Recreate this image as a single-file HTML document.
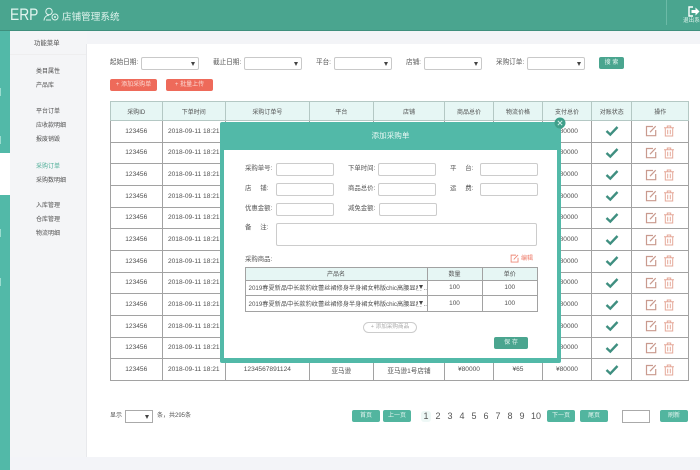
<!DOCTYPE html>
<html lang="zh"><head><meta charset="utf-8"><title>ERP</title>
<style>
*{box-sizing:border-box;margin:0;padding:0}
html,body{width:700px;height:470px;overflow:hidden;background:#fff}
body{font-family:"Liberation Sans","Noto Sans CJK SC",sans-serif;font-size:6px;color:#555;position:relative}
#w{position:absolute;left:0;top:0;width:700px;height:470px;filter:blur(.35px);overflow:hidden}
.a{position:absolute;white-space:nowrap}
.t{position:absolute;white-space:nowrap;line-height:10px;height:10px}
.s{position:absolute;height:13px;width:58px;background:#fff;border:1px solid #c9c9c9;border-radius:2px}
.s:after{content:"";position:absolute;right:3px;top:4px;border-left:2.5px solid transparent;border-right:2.5px solid transparent;border-top:4px solid #444}
.i{position:absolute;height:12.5px;width:58px;background:#fff;border:1px solid #ccc;border-radius:2px}
.b{position:absolute;height:12px;width:28px;background:#52b59f;color:#e6f6f1;border-radius:2px;text-align:center;line-height:12px;font-size:6px}
.m{position:absolute;left:36px;line-height:10px;height:10px;color:#505050;font-size:6px}
table{border-collapse:collapse;table-layout:fixed;position:absolute}
td,th{border:1px solid #a2a2a2;text-align:center;font-weight:normal;font-size:6px;color:#505050;padding:0;overflow:hidden;white-space:nowrap}
#T{left:110px;top:101px;width:578px}
#T th{height:19px;background:#e6f6f4;border-color:#b4c8c4}
#T td{height:21.67px;font-size:6.6px}
svg{display:block;margin:auto}
#M table{left:24.5px;top:145px;width:292.5px}
#M th{height:12.5px;background:#e6f6f4}
#M td{height:15.7px;text-align:left;padding-left:3px;font-size:6.2px}
#M td.c{text-align:center;padding:0;font-size:6.4px}
.n{position:absolute;top:411px;font-size:9px;line-height:11px;color:#555;width:10px;text-align:center}
</style></head><body>
<svg width="0" height="0" style="position:absolute"><defs>
<symbol id="ck" viewBox="0 0 14 12"><path d="M1.5 6 L5.3 9.6 L12.5 2" fill="none" stroke="#3f8f80" stroke-width="2.4"/></symbol>
<symbol id="ed" viewBox="0 0 12 12"><path d="M8 1.5H1.5V10.7H10.7V5M5 7.2L10.7 1.2" fill="none" stroke="#c99a8e" stroke-width="1.2"/></symbol>
<symbol id="tr" viewBox="0 0 12 12"><path d="M1 2.8H11M4.3 2.5V1H7.7V2.5M2.3 3V11H9.7V3M4.7 4.7V9.3M7.3 4.7V9.3" fill="none" stroke="#e5a899" stroke-width="1"/></symbol>
</defs></svg>
<div id="w">
<div class="a" style="left:0;top:0;width:700px;height:31px;background:#4aa58f;border-bottom:1px solid #3f8f7d"></div>
<div class="a" style="left:10px;top:1px;font-size:13.8px;line-height:28px;color:#e2f5ef;transform:scaleY(1.22);transform-origin:0 50%">ERP</div>
<svg class="a" style="left:43px;top:7px" width="17" height="15" viewBox="0 0 17 15"><circle cx="6" cy="4.5" r="3.2" fill="none" stroke="#dff3ed"/><path d="M1 13.5C1.5 9.5 4 8.3 6 8.3M8 13H3" fill="none" stroke="#dff3ed"/><circle cx="12" cy="10" r="3" fill="none" stroke="#dff3ed"/><circle cx="12" cy="10" r="1" fill="#dff3ed"/></svg>
<div class="a" style="left:62px;top:11px;font-size:9.6px;line-height:14px;color:#e2f5ef">店铺管理系统</div>
<div class="a" style="left:666px;top:0;width:1px;height:25px;background:#6cbaa7"></div>
<svg class="a" style="left:688px;top:6px" width="12" height="11" viewBox="0 0 12 11"><path d="M5 1H1V10H5" fill="none" stroke="#fff" stroke-width="1.4"/><path d="M3.5 4H7.5V1.5L11.5 5.5L7.5 9.5V7H3.5Z" fill="#fff"/></svg>
<div class="t" style="left:683px;top:16px;color:#dff3ed;font-size:5.6px">退出系统</div>

<div class="a" style="left:0;top:31px;width:10px;height:122px;background:#52b9a8"></div>
<div class="a" style="left:0;top:153px;width:10px;height:42px;background:#fff"></div>
<div class="a" style="left:0;top:195px;width:10px;height:275px;background:#52b9a8"></div>
<div class="a" style="left:0;top:88px;width:1px;height:8px;background:#9adccf"></div>
<div class="a" style="left:0;top:136px;width:1px;height:8px;background:#9adccf"></div>
<div class="a" style="left:0;top:229px;width:1px;height:8px;background:#9adccf"></div>
<div class="a" style="left:0;top:278px;width:1px;height:8px;background:#9adccf"></div>
<div class="a" style="left:10px;top:31px;width:690px;height:13px;background:#f3f4f7"></div>
<div class="a" style="left:10px;top:31px;width:77px;height:439px;background:#f4f5f7"></div>
<div class="a" style="left:10px;top:457px;width:690px;height:13px;background:#f3f4f8"></div>
<div class="a" style="left:10px;top:54px;width:76px;height:1px;background:#eeeeef"></div>
<div class="a" style="left:86px;top:44px;width:1px;height:413px;background:#e8e9ec"></div>
<div class="m" style="left:34px;top:39px;font-size:6.4px">功能菜单</div>
<div class="m" style="top:67px">类目属性</div>
<div class="m" style="top:81px">产品库</div>
<div class="m" style="top:107px">平台订单</div>
<div class="m" style="top:121px">应收款明细</div>
<div class="m" style="top:135px">报废销毁</div>
<div class="m" style="top:161.5px;color:#4fae98">采购订单</div>
<div class="m" style="top:175.5px">采购数明细</div>
<div class="m" style="top:200.5px">入库管理</div>
<div class="m" style="top:214.5px">仓库管理</div>
<div class="m" style="top:228.5px">物流明细</div>

<div class="t" style="left:110px;top:58px;font-size:6.6px">起始日期:</div><div class="s" style="left:141px;top:56.5px"></div>
<div class="t" style="left:213px;top:58px;font-size:6.6px">截止日期:</div><div class="s" style="left:244px;top:56.5px"></div>
<div class="t" style="left:316px;top:58px;font-size:6.6px">平台:</div><div class="s" style="left:334px;top:56.5px"></div>
<div class="t" style="left:406px;top:58px;font-size:6.6px">店铺:</div><div class="s" style="left:424px;top:56.5px"></div>
<div class="t" style="left:496px;top:58px;font-size:6.6px">采购订单:</div><div class="s" style="left:527px;top:56.5px"></div>
<div class="b" style="left:599px;top:57px;width:25px;background:#4aa58f">搜 索</div>
<div class="b" style="left:110px;top:79px;width:47px;background:#ee6a5a;color:#fbd9d2">+ 添加采购单</div>
<div class="b" style="left:166px;top:79px;width:47px;background:#ee6a5a;color:#fbd9d2">+ 批量上传</div>

<table id="T"><colgroup><col style="width:51.5px"><col style="width:63.5px"><col style="width:83.7px"><col style="width:64.3px"><col style="width:71px"><col style="width:49px"><col style="width:49px"><col style="width:49px"><col style="width:40.5px"><col style="width:56.5px"></colgroup>
<tr><th>采购ID</th><th>下单时间</th><th>采购订单号</th><th>平台</th><th>店铺</th><th>商品总价</th><th>物流价格</th><th>支付总价</th><th>对账状态</th><th>操作</th></tr>
<tr><td>123456</td><td>2018-09-11 18:21</td><td>1234567891124</td><td>亚马逊</td><td>亚马逊1号店铺</td><td>¥80000</td><td>¥65</td><td>¥80000</td><td><svg width="14" height="12"><use href="#ck"/></svg></td><td><svg width="30" height="12"><use href="#ed" x="0" width="12" height="12"/><use href="#tr" x="18" width="12" height="12"/></svg></td></tr>
<tr><td>123456</td><td>2018-09-11 18:21</td><td>1234567891124</td><td>亚马逊</td><td>亚马逊1号店铺</td><td>¥80000</td><td>¥65</td><td>¥80000</td><td><svg width="14" height="12"><use href="#ck"/></svg></td><td><svg width="30" height="12"><use href="#ed" x="0" width="12" height="12"/><use href="#tr" x="18" width="12" height="12"/></svg></td></tr>
<tr><td>123456</td><td>2018-09-11 18:21</td><td>1234567891124</td><td>亚马逊</td><td>亚马逊1号店铺</td><td>¥80000</td><td>¥65</td><td>¥80000</td><td><svg width="14" height="12"><use href="#ck"/></svg></td><td><svg width="30" height="12"><use href="#ed" x="0" width="12" height="12"/><use href="#tr" x="18" width="12" height="12"/></svg></td></tr>
<tr><td>123456</td><td>2018-09-11 18:21</td><td>1234567891124</td><td>亚马逊</td><td>亚马逊1号店铺</td><td>¥80000</td><td>¥65</td><td>¥80000</td><td><svg width="14" height="12"><use href="#ck"/></svg></td><td><svg width="30" height="12"><use href="#ed" x="0" width="12" height="12"/><use href="#tr" x="18" width="12" height="12"/></svg></td></tr>
<tr><td>123456</td><td>2018-09-11 18:21</td><td>1234567891124</td><td>亚马逊</td><td>亚马逊1号店铺</td><td>¥80000</td><td>¥65</td><td>¥80000</td><td><svg width="14" height="12"><use href="#ck"/></svg></td><td><svg width="30" height="12"><use href="#ed" x="0" width="12" height="12"/><use href="#tr" x="18" width="12" height="12"/></svg></td></tr>
<tr><td>123456</td><td>2018-09-11 18:21</td><td>1234567891124</td><td>亚马逊</td><td>亚马逊1号店铺</td><td>¥80000</td><td>¥65</td><td>¥80000</td><td><svg width="14" height="12"><use href="#ck"/></svg></td><td><svg width="30" height="12"><use href="#ed" x="0" width="12" height="12"/><use href="#tr" x="18" width="12" height="12"/></svg></td></tr>
<tr><td>123456</td><td>2018-09-11 18:21</td><td>1234567891124</td><td>亚马逊</td><td>亚马逊1号店铺</td><td>¥80000</td><td>¥65</td><td>¥80000</td><td><svg width="14" height="12"><use href="#ck"/></svg></td><td><svg width="30" height="12"><use href="#ed" x="0" width="12" height="12"/><use href="#tr" x="18" width="12" height="12"/></svg></td></tr>
<tr><td>123456</td><td>2018-09-11 18:21</td><td>1234567891124</td><td>亚马逊</td><td>亚马逊1号店铺</td><td>¥80000</td><td>¥65</td><td>¥80000</td><td><svg width="14" height="12"><use href="#ck"/></svg></td><td><svg width="30" height="12"><use href="#ed" x="0" width="12" height="12"/><use href="#tr" x="18" width="12" height="12"/></svg></td></tr>
<tr><td>123456</td><td>2018-09-11 18:21</td><td>1234567891124</td><td>亚马逊</td><td>亚马逊1号店铺</td><td>¥80000</td><td>¥65</td><td>¥80000</td><td><svg width="14" height="12"><use href="#ck"/></svg></td><td><svg width="30" height="12"><use href="#ed" x="0" width="12" height="12"/><use href="#tr" x="18" width="12" height="12"/></svg></td></tr>
<tr><td>123456</td><td>2018-09-11 18:21</td><td>1234567891124</td><td>亚马逊</td><td>亚马逊1号店铺</td><td>¥80000</td><td>¥65</td><td>¥80000</td><td><svg width="14" height="12"><use href="#ck"/></svg></td><td><svg width="30" height="12"><use href="#ed" x="0" width="12" height="12"/><use href="#tr" x="18" width="12" height="12"/></svg></td></tr>
<tr><td>123456</td><td>2018-09-11 18:21</td><td>1234567891124</td><td>亚马逊</td><td>亚马逊1号店铺</td><td>¥80000</td><td>¥65</td><td>¥80000</td><td><svg width="14" height="12"><use href="#ck"/></svg></td><td><svg width="30" height="12"><use href="#ed" x="0" width="12" height="12"/><use href="#tr" x="18" width="12" height="12"/></svg></td></tr>
<tr><td>123456</td><td>2018-09-11 18:21</td><td>1234567891124</td><td>亚马逊</td><td>亚马逊1号店铺</td><td>¥80000</td><td>¥65</td><td>¥80000</td><td><svg width="14" height="12"><use href="#ck"/></svg></td><td><svg width="30" height="12"><use href="#ed" x="0" width="12" height="12"/><use href="#tr" x="18" width="12" height="12"/></svg></td></tr>
</table>

<div class="t" style="left:110px;top:411px">显示</div>
<div class="s" style="left:125px;top:410px;width:28px;border-color:#aaa;border-radius:0"></div>
<div class="t" style="left:157px;top:411px">条，共295条</div>
<div class="b" style="left:352px;top:410px">首页</div>
<div class="b" style="left:383px;top:410px">上一页</div>
<div class="a" style="left:421px;top:411px;width:10px;height:11px;background:#eef8f6;border-radius:3px"></div>
<div class="n" style="left:421px">1</div><div class="n" style="left:433px">2</div><div class="n" style="left:445px">3</div><div class="n" style="left:457px">4</div><div class="n" style="left:469px">5</div><div class="n" style="left:481px">6</div><div class="n" style="left:493px">7</div><div class="n" style="left:505px">8</div><div class="n" style="left:517px">9</div><div class="n" style="left:531px">10</div>
<div class="b" style="left:547px;top:410px">下一页</div>
<div class="b" style="left:580px;top:410px">尾页</div>
<div class="a" style="left:622px;top:410px;width:28px;height:13px;border:1px solid #aaa;background:#fff"></div>
<div class="b" style="left:660px;top:410px">刷新</div>

<div id="M" class="a" style="left:220px;top:122px;width:341px;height:241px;background:#52b9a8;border-radius:2px">
<div class="a" style="left:4px;top:28px;width:332.5px;height:208px;background:#fff"></div>
<div class="a" style="left:0;top:8px;width:341px;text-align:center;color:#e9f8f4;font-size:7.6px;line-height:12px">添加采购单</div>
<div class="t" style="left:25px;top:42px;font-size:6.4px">采购单号:</div><div class="i" style="left:56px;top:41px"></div>
<div class="t" style="left:128px;top:42px;font-size:6.4px">下单时间:</div><div class="i" style="left:158px;top:41px"></div>
<div class="t" style="left:230px;top:42px;font-size:6.4px">平&nbsp;&nbsp;&nbsp;&nbsp;&nbsp;台:</div><div class="i" style="left:260px;top:41px"></div>
<div class="t" style="left:25px;top:62px;font-size:6.4px">店&nbsp;&nbsp;&nbsp;&nbsp;&nbsp;铺:</div><div class="i" style="left:56px;top:61px"></div>
<div class="t" style="left:128px;top:62px;font-size:6.4px">商品总价:</div><div class="i" style="left:158px;top:61px"></div>
<div class="t" style="left:230px;top:62px;font-size:6.4px">运&nbsp;&nbsp;&nbsp;&nbsp;&nbsp;费:</div><div class="i" style="left:260px;top:61px"></div>
<div class="t" style="left:25px;top:82px;font-size:6.4px">优惠金额:</div><div class="i" style="left:56px;top:81px"></div>
<div class="t" style="left:128px;top:82px;font-size:6.4px">减免金额:</div><div class="i" style="left:159px;top:81px"></div>
<div class="t" style="left:25px;top:101px;font-size:6.4px">备&nbsp;&nbsp;&nbsp;&nbsp;&nbsp;注:</div><div class="i" style="left:56px;top:101px;width:261px;height:23px"></div>
<div class="t" style="left:25px;top:133px;font-size:6.4px">采购商品:</div>
<svg class="a" style="left:290px;top:132px" width="9" height="9" viewBox="0 0 12 12"><path d="M8 1.5H1.5V10.7H10.7V5M5 7.2L10.7 1.2" fill="none" stroke="#ee8a78" stroke-width="1.2"/></svg>
<div class="t" style="left:301px;top:132px;color:#ee7a68">编辑</div>
<table><colgroup><col style="width:182px"><col style="width:55px"><col style="width:55.5px"></colgroup>
<tr><th>产品名</th><th>数量</th><th>单价</th></tr>
<tr><td>2019春夏新品中长款豹纹蕾丝裙修身半身裙女韩版chic高腰显瘦......</td><td class="c">100</td><td class="c">100</td></tr>
<tr><td>2019春夏新品中长款豹纹蕾丝裙修身半身裙女韩版chic高腰显瘦......</td><td class="c">100</td><td class="c">100</td></tr>
</table>
<div class="a" style="left:198px;top:162px;width:6px;height:6px;background:#fff"></div>
<div class="a" style="left:198px;top:178px;width:6px;height:6px;background:#fff"></div>
<div class="a" style="left:198.5px;top:163px;border-left:2.5px solid transparent;border-right:2.5px solid transparent;border-top:4px solid #444"></div>
<div class="a" style="left:198.5px;top:179px;border-left:2.5px solid transparent;border-right:2.5px solid transparent;border-top:4px solid #444"></div>
<div class="a" style="left:143px;top:200px;width:54px;height:11px;border:1px solid #ccc;border-radius:6px;text-align:center;line-height:9px;color:#aaa;font-size:5.6px;background:#fff">+ 添加采购商品</div>
<div class="b" style="left:274px;top:214.5px;width:34px;background:#4aa58f">保 存</div>
</div>
<svg class="a" style="left:554px;top:116.5px" width="12" height="12" viewBox="0 0 12 12"><circle cx="6" cy="6" r="5.5" fill="#3f9f8a"/><path d="M3.8 3.8L8.2 8.2M8.2 3.8L3.8 8.2" stroke="#d8f2ec" stroke-width="1"/></svg>
</div>
</body></html>
